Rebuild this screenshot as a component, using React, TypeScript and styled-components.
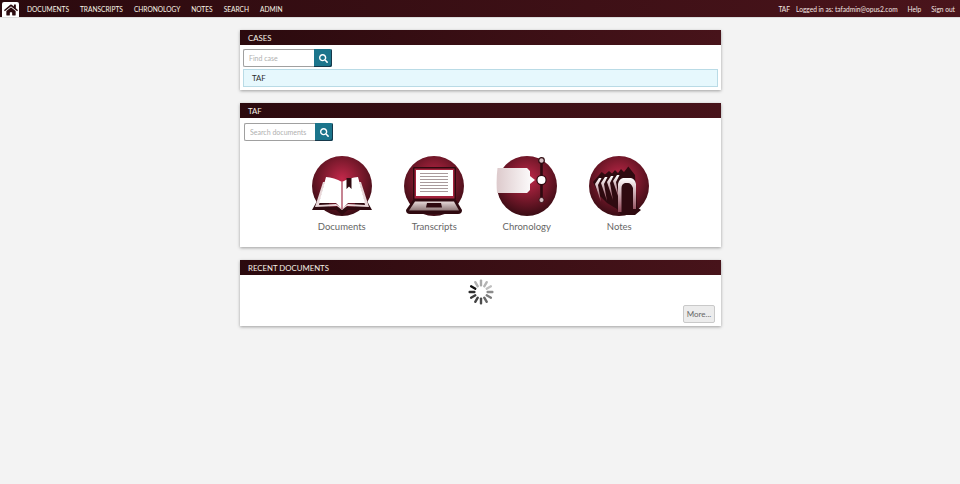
import React from 'react';
import styled, { createGlobalStyle } from 'styled-components';
import { FaHome, FaSearch } from 'react-icons/fa';

const GlobalStyle = createGlobalStyle`
  html, body {
    margin: 0;
    padding: 0;
    min-height: 100%;
    background: #f3f3f3;
    font-family: Lato, "Liberation Sans", sans-serif;
  }
`;

const NavBar = styled.nav`
  height: 17px;
  display: flex;
  align-items: flex-end;
  justify-content: space-between;
  background: linear-gradient(to right, #2b0a0e, #4a141b);
  box-shadow: 0 1px 0 #dcdcdc;
`;

const NavLeft = styled.div`
  display: flex;
  align-items: center;
  height: 100%;
  padding-left: 2px;
`;

const HomeTab = styled.a`
  width: 17px;
  height: 15px;
  margin-top: 2px;
  margin-right: 8px;
  background: #fff;
  border-radius: 2px 2px 0 0;
  display: flex;
  align-items: center;
  justify-content: center;
  color: #2b0a0e;
  font-size: 14px;
`;

const NavLink = styled.a`
  color: #fbf6e8;
  font-size: 6.6px;
  margin-right: 11px;
  line-height: 18px;
`;

const NavRight = styled.div`
  display: flex;
  align-items: center;
  height: 100%;
  padding-right: 5px;
  color: #f3e6e2;
  font-size: 6.6px;
`;

const NavInfo = styled.span<{ $gap: number }>`
  margin-left: ${(p) => p.$gap}px;
  line-height: 18px;
`;

const Main = styled.main`
  width: 481px;
  margin: 13px 0 0 240px;
  padding-bottom: 40px;
  display: flex;
  flex-direction: column;
  gap: 13px;
`;

const Card = styled.section`
  background: #fff;
  box-shadow: 0 1px 3px rgba(0, 0, 0, 0.35);
`;

const CardHeader = styled.h2`
  margin: 0;
  height: 15px;
  padding-left: 8px;
  background: linear-gradient(to right, #2b0a0e, #47131a);
  color: #f7f1e8;
  font-size: 7.8px;
  font-weight: 400;
  line-height: 17px;
  text-transform: uppercase;
`;

const SearchRow = styled.div<{ $left: number; $top: number; $width: number }>`
  display: flex;
  height: 18px;
  width: ${(p) => p.$width}px;
  margin: ${(p) => p.$top}px 0 0 ${(p) => p.$left}px;
`;

const SearchInput = styled.input`
  flex: 1;
  min-width: 0;
  box-sizing: border-box;
  padding: 0 5px;
  border: 1px solid #a0a0a0;
  border-right: 0;
  border-radius: 2px 0 0 2px;
  background: #fff;
  font-family: inherit;
  font-size: 7px;
  outline: none;

  &::placeholder {
    color: #b0b0b0;
  }
`;

const SearchButton = styled.button`
  width: 18px;
  height: 18px;
  padding: 0;
  border: 0;
  border-radius: 0 2px 2px 0;
  background: #1b758c;
  color: #fff;
  font-size: 9px;
  display: flex;
  align-items: center;
  justify-content: center;
  box-shadow: inset -1px -1px 0 #16384a;
`;

const CaseRow = styled.div`
  height: 16px;
  margin: 2px 3px 0 3px;
  padding-left: 8px;
  border: 1px solid #b9dbe6;
  background: #e6f8fd;
  color: #2d2d2d;
  font-size: 7.8px;
  line-height: 17px;
`;

const CaseList = styled.div`
  padding-bottom: 3px;
`;

const ShortcutRow = styled.div`
  display: flex;
  justify-content: center;
  gap: 32.5px;
  margin-top: 15px;
  padding-bottom: 14px;
`;

const Shortcut = styled.a`
  width: 60px;
  display: flex;
  flex-direction: column;
  align-items: center;
  color: #666;
  font-size: 9.5px;
  line-height: 13px;
`;

const ShortcutIcon = styled.svg`
  width: 64px;
  height: 62px;
  margin: -1px -2px 3px;
  display: block;
`;

const LoaderBody = styled.div`
  height: 51px;
  position: relative;
  display: flex;
  justify-content: center;
  padding-top: 4px;
  box-sizing: border-box;
`;

const Spinner = styled.svg`
  width: 26px;
  height: 26px;
`;

const MoreButton = styled.button`
  position: absolute;
  right: 6px;
  bottom: 3px;
  height: 18px;
  width: 32px;
  padding: 0;
  border: 1px solid #c9c9c9;
  border-radius: 2px;
  background: #ececec;
  color: #666;
  font-family: inherit;
  font-size: 8px;
`;

const navItems = ['DOCUMENTS', 'TRANSCRIPTS', 'CHRONOLOGY', 'NOTES', 'SEARCH', 'ADMIN'];

function Defs({ id }: { id: string }) {
  return (
    <defs>
      <radialGradient id={id} cx="50%" cy="38%" r="62%">
        <stop offset="0%" stopColor="#c2284a" />
        <stop offset="50%" stopColor="#7f1a2e" />
        <stop offset="100%" stopColor="#3a0c14" />
      </radialGradient>
    </defs>
  );
}

function DocumentsIcon() {
  return (
    <ShortcutIcon viewBox="0 0 64 62">
      <Defs id="docBg" />
      <circle cx="32" cy="31" r="30" fill="url(#docBg)" />
      <path d="M13 28 L7 46 L2 55 L26 55 L32 60 L38 55 L62 55 L57 46 L51 28 L45 30 V52 H19 V30 Z" fill="#2f0a10" />
      <path d="M13 27 L5 52 L27 51 L32 55 L37 51 L59 52 L51 27 L49 27 L55 50 L38 49 L32 53 L26 49 L9 50 L15 27 Z" fill="#e9d6d8" />
      <path d="M16 22 L9 48 L26 48 L32 54 V27 C27 24 21 22.5 16 22 Z" fill="#fff" />
      <path d="M48 22 L55 48 L38 48 L32 54 V27 C37 24 43 22.5 48 22 Z" fill="#fff" />
      <path d="M32 27 V54" stroke="#a0324a" strokeWidth="1.2" />
      <path d="M36.5 23 H41.5 V34 L39 31.5 L36.5 34 Z" fill="#2f0a10" />
    </ShortcutIcon>
  );
}

function TranscriptsIcon() {
  return (
    <ShortcutIcon viewBox="0 0 64 62">
      <defs>
        <linearGradient id="trBase" x1="0" x2="0" y1="0" y2="1">
          <stop offset="0%" stopColor="#e6d8d8" />
          <stop offset="100%" stopColor="#8f7878" />
        </linearGradient>
      </defs>
      <Defs id="trBg" />
      <circle cx="32" cy="31" r="30" fill="url(#trBg)" />
      <rect x="11" y="12" width="43" height="33" fill="#2f0a10" rx="1" />
      <rect x="12.5" y="13.5" width="40" height="30" fill="#a3223c" />
      <rect x="14" y="15" width="37" height="26" fill="#fff" />
      <path d="M18 18.5 H46 M18 21.5 H46 M18 24.5 H46 M18 27.5 H46 M18 30.5 H46 M18 33.5 H46 M18 36.5 H46" stroke="#a99a9c" strokeWidth="1.1" />
      <path d="M11 45 H54 L60 55 Q60 59 56 59 H8 Q4 59 4 55 Z" fill="#2f0a10" />
      <path d="M13 46.5 H52 L57 55.5 H7 Z" fill="url(#trBase)" />
      <path d="M25 48 H39 L40 52.5 H24 Z" fill="#2f0a10" />
    </ShortcutIcon>
  );
}

function ChronologyIcon() {
  return (
    <ShortcutIcon viewBox="0 0 64 62">
      <defs>
        <linearGradient id="chFlag" x1="0" x2="1" y1="0" y2="0">
          <stop offset="0%" stopColor="#ddcacc" />
          <stop offset="100%" stopColor="#ffffff" />
        </linearGradient>
      </defs>
      <Defs id="chBg" />
      <circle cx="32" cy="31" r="30" fill="url(#chBg)" />
      <path d="M46.5 6 V46" stroke="#2f0a10" strokeWidth="2.6" />
      <path d="M2.5 13 H32 L35 16 V21 L40 25 L35 29 V35 L32 38 H2 Q1 25 2.5 13 Z" fill="url(#chFlag)" />
      <circle cx="46.5" cy="5.5" r="2.8" fill="#d5c0c4" stroke="#2f0a10" strokeWidth="1.2" />
      <circle cx="46.5" cy="25" r="4.6" fill="#fff" stroke="#2f0a10" strokeWidth="1.2" />
      <circle cx="46.5" cy="45" r="2.5" fill="#d5c0c4" stroke="#2f0a10" strokeWidth="0.8" />
    </ShortcutIcon>
  );
}

function NotesIcon() {
  const tabs = [
    { x: 12, top: 17 },
    { x: 18, top: 16 },
    { x: 24, top: 15 },
    { x: 30, top: 14 },
  ];
  return (
    <ShortcutIcon viewBox="0 0 64 62">
      <defs>
        <linearGradient id="noFade" x1="0" x2="0" y1="0" y2="1">
          <stop offset="0%" stopColor="#ffffff" />
          <stop offset="100%" stopColor="#8d4454" />
        </linearGradient>
      </defs>
      <Defs id="noBg" />
      <circle cx="32" cy="31" r="30" fill="url(#noBg)" />
      <path d="M6 27 L14.7 17 L18 19.5 L22 16 L25 18.5 L28 15 L31 18 L34 14 L37 17 L41.3 11.5 L48 20 L50 52 L54 55 L48 60 H34 L30 54 L20 48 L12 40 Z" fill="#2f0a10" />
      {tabs.map((t) => (
        <path
          key={t.x}
          d={`M${t.x - 4} ${t.top + 12} L${t.x} ${t.top + 6} H${t.x + 2.5} L${t.x - 1} ${t.top + 13} L${t.x + 2} ${t.top + 30} Z`}
          fill="url(#noFade)"
        />
      ))}
      <path d="M31 57 V29 Q32 24 36 23 H44 Q48 24 49 29 V54 H46 V33 Q44 28 41 28 H38 Q34.5 29 34.5 33 V57 Z" fill="url(#noFade)" />
    </ShortcutIcon>
  );
}

function LoadingSpinner() {
  const spokes = Array.from({ length: 12 }, (_, i) => i);
  const shades = ['#a8a8a8', '#b4b4b4', '#c0c0c0', '#8c8c8c', '#7c7c7c', '#666', '#4c4c4c', '#444', '#3c3c3c', '#2c2c2c', '#111', '#b0b0b0'];
  return (
    <Spinner viewBox="0 0 26 26">
      {spokes.map((i) => (
        <rect
          key={i}
          x="11.8"
          y="0.5"
          width="2.4"
          height="7"
          rx="1"
          fill={shades[i]}
          transform={`rotate(${i * 30} 13 13)`}
        />
      ))}
    </Spinner>
  );
}

export default function App() {
  return (
    <>
      <GlobalStyle />
      <NavBar>
        <NavLeft>
          <HomeTab>
            <FaHome />
          </HomeTab>
          {navItems.map((item) => (
            <NavLink key={item}>{item}</NavLink>
          ))}
        </NavLeft>
        <NavRight>
          <NavInfo $gap={0}>TAF</NavInfo>
          <NavInfo $gap={6}>Logged in as: tafadmin@opus2.com</NavInfo>
          <NavInfo $gap={10}>Help</NavInfo>
          <NavInfo $gap={10}>Sign out</NavInfo>
        </NavRight>
      </NavBar>
      <Main>
        <Card>
          <CardHeader>Cases</CardHeader>
          <CaseList>
            <SearchRow $left={3} $top={4} $width={89}>
              <SearchInput placeholder="Find case" />
              <SearchButton>
                <FaSearch />
              </SearchButton>
            </SearchRow>
            <CaseRow>TAF</CaseRow>
          </CaseList>
        </Card>
        <Card>
          <CardHeader>TAF</CardHeader>
          <SearchRow $left={4} $top={5} $width={89}>
            <SearchInput placeholder="Search documents" />
            <SearchButton>
              <FaSearch />
            </SearchButton>
          </SearchRow>
          <ShortcutRow>
            <Shortcut>
              <DocumentsIcon />
              Documents
            </Shortcut>
            <Shortcut>
              <TranscriptsIcon />
              Transcripts
            </Shortcut>
            <Shortcut>
              <ChronologyIcon />
              Chronology
            </Shortcut>
            <Shortcut>
              <NotesIcon />
              Notes
            </Shortcut>
          </ShortcutRow>
        </Card>
        <Card>
          <CardHeader>Recent documents</CardHeader>
          <LoaderBody>
            <LoadingSpinner />
            <MoreButton>More...</MoreButton>
          </LoaderBody>
        </Card>
      </Main>
    </>
  );
}
